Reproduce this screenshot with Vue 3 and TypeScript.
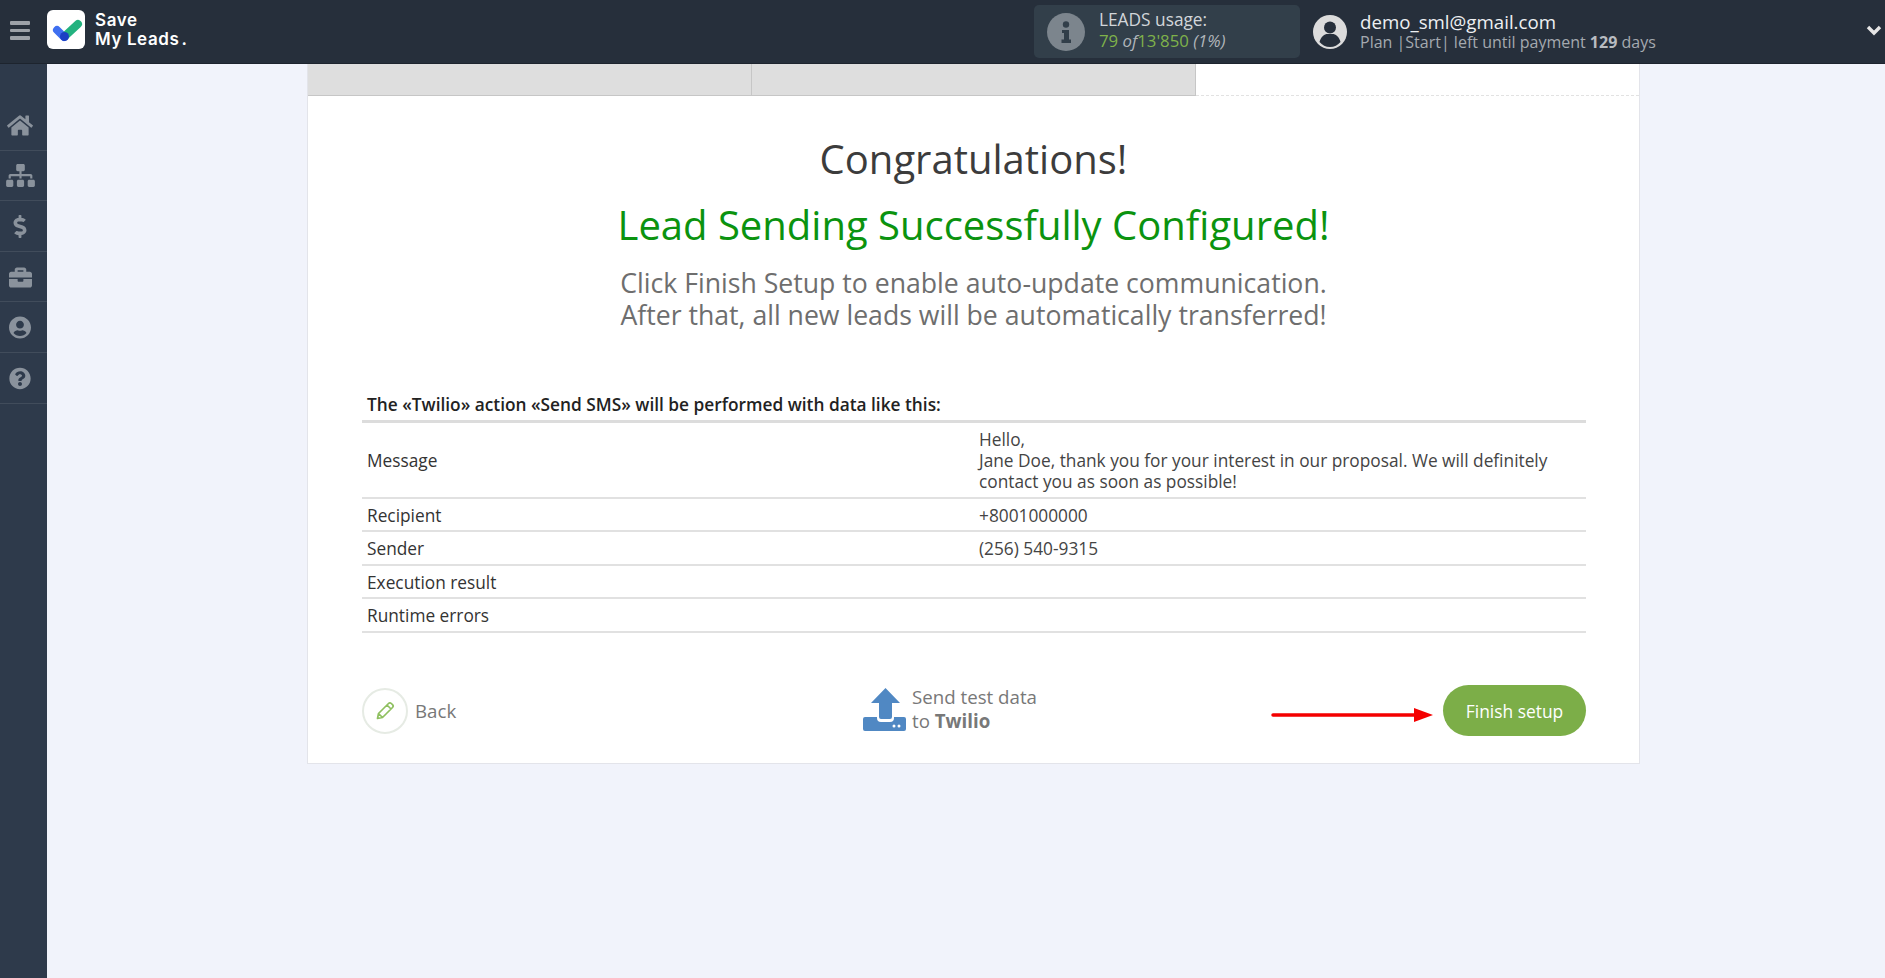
<script setup lang="ts">
interface Row { label: string; lines: string[] }
const rows: Row[] = [
  { label: 'Message', lines: ['Hello,', 'Jane Doe, thank you for your interest in our proposal. We will definitely contact you as soon as possible!'] },
  { label: 'Recipient', lines: ['+8001000000'] },
  { label: 'Sender', lines: ['(256) 540-9315'] },
  { label: 'Execution result', lines: [] },
  { label: 'Runtime errors', lines: [] },
]
const nav = [
  { vb: '0 0 576 512', w: 26, d: 'M280.37 148.26L96 300.11V464a16 16 0 0 0 16 16l112.06-.29a16 16 0 0 0 15.92-16V368a16 16 0 0 1 16-16h64a16 16 0 0 1 16 16v95.64a16 16 0 0 0 16 16.05L464 480a16 16 0 0 0 16-16V300L295.67 148.26a12.19 12.19 0 0 0-15.3 0zM571.6 251.47L488 182.56V44.05a12 12 0 0 0-12-12h-56a12 12 0 0 0-12 12v72.61L318.47 43a48 48 0 0 0-61 0L4.34 251.47a12 12 0 0 0-1.6 16.9l25.5 31A12 12 0 0 0 45.15 301l235.22-193.74a12.19 12.19 0 0 1 15.3 0L530.9 301a12 12 0 0 0 16.9-1.6l25.5-31a12 12 0 0 0-1.7-16.93z' },
  { vb: '0 0 640 512', w: 29, d: 'M128 352H32c-17.67 0-32 14.33-32 32v96c0 17.67 14.33 32 32 32h96c17.67 0 32-14.33 32-32v-96c0-17.67-14.33-32-32-32zm-24-80h192v48h48v-48h192v48h48v-57.59c0-21.17-17.23-38.41-38.41-38.41H344v-64h40c17.67 0 32-14.33 32-32V32c0-17.67-14.33-32-32-32H256c-17.67 0-32 14.33-32 32v96c0 17.67 14.33 32 32 32h40v64H94.41C73.23 224 56 241.23 56 262.41V320h48v-48zm264 80h-96c-17.67 0-32 14.33-32 32v96c0 17.67 14.33 32 32 32h96c17.67 0 32-14.33 32-32v-96c0-17.67-14.33-32-32-32zm240 0h-96c-17.67 0-32 14.33-32 32v96c0 17.67 14.33 32 32 32h96c17.67 0 32-14.33 32-32v-96c0-17.67-14.33-32-32-32z' },
  { vb: '0 0 288 512', w: 14, d: 'M209.2 233.4l-108-31.6C88.7 198.2 80 186.5 80 173.5c0-16.3 13.2-29.5 29.5-29.5h66.3c12.2 0 24.2 3.7 34.2 10.5 6.1 4.1 14.3 3.1 19.5-2l34.8-34c7.1-6.9 6.1-18.4-1.8-24.5C238 74.8 207.4 64.1 176 64V16c0-8.8-7.2-16-16-16h-32c-8.8 0-16 7.2-16 16v48h-2.5C45.8 64-5.4 118.7.5 183.6c4.2 46.1 39.4 83.6 83.8 96.6l102.5 30c12.5 3.7 21.2 15.3 21.2 28.3 0 16.3-13.2 29.5-29.5 29.5h-66.3C100 368 88 364.3 78 357.5c-6.1-4.1-14.3-3.1-19.5 2l-34.8 34c-7.1 6.9-6.1 18.4 1.8 24.5 24.5 19.2 55.1 29.9 86.5 30v48c0 8.8 7.2 16 16 16h32c8.8 0 16-7.2 16-16v-48.2c46.6-.9 90.3-28.6 105.7-72.7 21.5-61.6-14.6-124.8-72.5-141.7z' },
  { vb: '0 0 512 512', w: 23, d: 'M320 336c0 8.84-7.16 16-16 16h-96c-8.84 0-16-7.16-16-16v-48H0v144c0 25.6 22.4 48 48 48h416c25.6 0 48-22.4 48-48V288H320v48zm144-208h-80V80c0-25.6-22.4-48-48-48H176c-25.6 0-48 22.4-48 48v48H48c-25.6 0-48 22.4-48 48v80h512v-80c0-25.6-22.4-48-48-48zm-144 0H192V96h128v32z' },
  { vb: '0 0 496 512', w: 22, d: 'M248 8C111 8 0 119 0 256s111 248 248 248 248-111 248-248S385 8 248 8zm0 96c48.6 0 88 39.4 88 88s-39.4 88-88 88-88-39.4-88-88 39.4-88 88-88zm0 344c-58.7 0-111.3-26.6-146.5-68.2 18.8-35.4 55.6-59.8 98.5-59.8 2.4 0 4.8.4 7.1 1.1 13 4.2 26.6 6.9 40.9 6.9 14.3 0 28-2.7 40.9-6.9 2.3-.7 4.7-1.1 7.1-1.1 42.9 0 79.7 24.4 98.5 59.8C359.3 421.4 306.7 448 248 448z' },
  { vb: '0 0 512 512', w: 22, d: 'M504 256c0 136.997-111.043 248-248 248S8 392.997 8 256C8 119.083 119.043 8 256 8s248 111.083 248 248zM262.655 90c-54.497 0-89.255 22.957-116.549 63.758-3.536 5.286-2.353 12.415 2.715 16.258l34.699 26.31c5.205 3.947 12.621 3.008 16.665-2.122 17.864-22.658 30.113-35.797 57.303-35.797 20.429 0 45.698 13.148 45.698 32.958 0 14.976-12.363 22.667-32.534 33.976C247.128 238.528 216 254.941 216 296v4c0 6.627 5.373 12 12 12h56c6.627 0 12-5.373 12-12v-1.333c0-28.462 83.186-29.647 83.186-106.667 0-58.002-60.165-102-116.531-102zM256 338c-25.365 0-46 20.635-46 46 0 25.364 20.635 46 46 46s46-20.636 46-46c0-25.365-20.635-46-46-46z' },
]
</script>

<template>
  <div class="page">
    <header class="topbar">
      <div class="burger"><span></span><span></span><span></span></div>
      <div class="logo">
        <svg viewBox="0 0 38 39" width="38" height="39">
          <rect width="38" height="39" rx="6" fill="#fff" />
          <path d="M10 20l7 7" stroke="#3f6ff0" stroke-width="8" stroke-linecap="round" />
          <path d="M18 26L31 14" stroke="#23b27f" stroke-width="8" stroke-linecap="round" />
          <circle cx="17.5" cy="26.500" r="4.500" fill="#1c3fc4" />
        </svg>
        <div class="logo-text">Save<br />My Leads<span class="dot">.</span></div>
      </div>
      <div class="usage">
        <svg class="info" viewBox="0 0 38 38" width="38" height="38">
          <circle cx="19" cy="19" r="19" fill="#7c858d" />
          <circle cx="19" cy="11.500" r="3.200" fill="#323f4a" />
          <path d="M15 17h7v9.500h2V30H14.500v-3.500H17V20h-2z" fill="#323f4a" />
        </svg>
        <div class="usage-text">
          <div class="usage-title">LEADS usage:</div>
          <div class="usage-val"><span class="g">79</span> <i>of</i><span class="g">13'850</span> <i>(1%)</i></div>
        </div>
      </div>
      <div class="account">
        <svg viewBox="0 0 34 34" width="34" height="34">
          <circle cx="17" cy="17" r="17" fill="#dcdcdc" />
          <circle cx="17" cy="12.500" r="6" fill="#262f3b" />
          <path d="M6.500 27c1.500-5.500 5-8 8-8h5c3 0 6.500 2.500 8 8-2.500 3-6.300 5-10.500 5s-8-2-10.500-5z" fill="#262f3b" />
        </svg>
        <div class="account-text">
          <div class="email">demo_sml@gmail.com</div>
          <div class="plan">Plan |Start| left until payment <b>129</b> days</div>
        </div>
      </div>
      <svg class="chev" viewBox="0 0 16 12" width="16" height="12">
        <path d="M2 3l6 6 6-6" fill="none" stroke="#e6e6e6" stroke-width="3.400" />
      </svg>
    </header>

    <div class="body">
      <nav class="sidebar">
        <div v-for="(n, i) in nav" :key="i" class="nav-item">
          <svg :viewBox="n.vb" :width="n.w" height="23"><path :d="n.d" fill="#8a929c" /></svg>
        </div>
      </nav>

      <main class="main">
        <section class="card">
          <div class="tabs">
            <div class="tab"></div>
            <div class="tab"></div>
            <div class="tab-rest"></div>
          </div>

          <h1 class="congrats">Congratulations!</h1>
          <h2 class="success">Lead Sending Successfully Configured!</h2>
          <p class="sub">Click Finish Setup to enable auto-update communication.<br />After that, all new leads will be automatically transferred!</p>

          <div class="content">
            <div class="table-title">The «Twilio» action «Send SMS» will be performed with data like this:</div>
            <table class="data">
              <tbody>
                <tr v-for="r in rows" :key="r.label">
                  <td class="c1">{{ r.label }}</td>
                  <td class="c2"><div v-for="l in r.lines" :key="l">{{ l }}</div></td>
                </tr>
              </tbody>
            </table>

            <div class="actions">
              <div class="back">
                <span class="back-circle">
                  <svg viewBox="0 0 24 24" width="24" height="24">
                    <path d="M4.500 19.500l1-5L15.500 4.500c.8-.8 2-.8 2.800 0l1.200 1.200c.8.800.8 2 0 2.800L9.500 18.500zM14 6l4 4M5.500 14.500l4 4" fill="none" stroke="#8fc060" stroke-width="1.700" stroke-linejoin="round" />
                  </svg>
                </span>
                <span>Back</span>
              </div>
              <div class="send">
                <svg viewBox="0 0 43 43" width="43" height="43">
                  <path d="M22.500 0L37 15H29V29a2 2 0 0 1-2 2H18a2 2 0 0 1-2-2V15H8z" fill="#5088c3" />
                  <path d="M0 31a2 2 0 0 1 2-2H14V30a4 4 0 0 0 4 4H27a4 4 0 0 0 4-4V29H41a2 2 0 0 1 2 2V41a2 2 0 0 1-2 2H2a2 2 0 0 1-2-2z" fill="#5088c3" />
                  <circle cx="31" cy="38" r="1.500" fill="#fff" /><circle cx="36" cy="38" r="1.500" fill="#fff" />
                </svg>
                <div class="send-text">Send test data<br />to <b>Twilio</b></div>
              </div>
              <button class="finish" type="button">Finish setup</button>
              <svg class="arrow" viewBox="0 0 162 16" width="162" height="16">
                <path d="M2 8H146" stroke="#f40000" stroke-width="3.500" stroke-linecap="round" />
                <path d="M143 1L162 8L143 15z" fill="#f40000" />
              </svg>
            </div>
          </div>
        </section>
      </main>
    </div>
  </div>
</template>

<style>
html, body { margin: 0; background: #f1f3fb; }
</style>

<style scoped>
.page {
  width: 1885px;
  height: 978px;
  display: flex;
  flex-direction: column;
  overflow: hidden;
  font-family: "Open Sans", "Noto Sans", sans-serif;
  background: #f1f3fb;
}
.topbar {
  height: 64px;
  flex: none;
  background: #262f3b;
  display: flex;
  align-items: center;
  box-sizing: border-box;
  border-bottom: 1px solid #1d242e;
  position: relative;
}
.burger {
  width: 20px;
  margin-left: 10px;
  margin-bottom: 2px;
  display: flex;
  flex-direction: column;
  gap: 4px;
}
.burger span { display: block; height: 3.500px; border-radius: 1px; background: #9ca1a8; }
.logo { display: flex; align-items: center; margin-left: 17px; margin-bottom: 5px; width: 987px; gap: 10px; }
.logo-text {
  font-family: Inter, "Noto Sans", sans-serif;
  font-weight: 600;
  font-size: 17px;
  line-height: 19px;
  color: #fff;
  letter-spacing: 0.6px;
  padding-top: 1px;
}
.dot { letter-spacing: 0; margin-left: 2px; }
.usage {
  width: 266px;
  height: 53px;
  background: #323f4a;
  border-radius: 5px;
  display: flex;
  align-items: center;
  box-sizing: border-box;
  padding-left: 13px;
  gap: 14px;
}
.usage-text { line-height: 21px; color: #d2d6da; margin-bottom: 4px; }
.usage-title { font-size: 17.300px; }
.usage-val { font-size: 16.800px; color: #b0b5ba; }
.usage-val .g { color: #7fb24a; }
.account { display: flex; align-items: center; margin-left: 13px; gap: 13px; }
.account-text { color: #fff; margin-bottom: 2px; }
.email { font-size: 18.700px; line-height: 23px; color: #eef0f2; }
.plan { font-size: 16px; line-height: 19px; color: #a4a9af; }
.plan b { font-weight: 700; color: #b8bcc1; }
.chev { position: absolute; left: 1866px; top: 24px; }
.body { flex: 1; display: flex; min-height: 0; }
.sidebar { width: 47px; flex: none; background: #2e3a4b; padding-top: 36px; box-sizing: border-box; }
.nav-item {
  height: 50.600px;
  box-sizing: border-box;
  display: flex;
  align-items: center;
  justify-content: center;
  padding: 1px 7px 0 0;
  border-bottom: 1px solid #414c5b;
}
.main { flex: 1; padding-left: 260px; min-width: 0; }
.card {
  width: 1333px;
  height: 700px;
  box-sizing: border-box;
  background: #fff;
  border: 1px solid #e3e4ea;
  border-top: none;
}
.tabs { display: flex; height: 32px; }
.tab {
  width: 444px;
  background: #dedede;
  border-bottom: 1px solid #c6c6c6;
  border-right: 1px solid #c6c6c6;
  box-sizing: border-box;
}
.tab-rest { flex: 1; border-bottom: 1px dashed #e2e2e2; }
.congrats, .success, .sub { margin: 0; text-align: center; font-weight: 400; }
.congrats { font-size: 40px; line-height: 50px; color: #3c3c3c; margin-top: 38px; }
.success { font-size: 40px; line-height: 50px; color: #0b930f; margin-top: 16px; }
.sub { font-size: 26.650px; line-height: 32px; color: #6e6e6e; margin-top: 17px; }
.content { margin: 57px 53px 0 54px; position: relative; }
.table-title {
  font-size: 17.300px;
  font-weight: 600;
  line-height: 34px;
  height: 32px;
  color: #222;
  padding-left: 5px;
  border-bottom: 3px solid #dcdcdc;
}
.data { width: 100%; border-collapse: collapse; table-layout: fixed; font-size: 17.300px; line-height: 21px; color: #333; }
.data td { padding: 6px 5px 4.500px; border-bottom: 2px solid #e1e1e1; height: 21px; vertical-align: middle; box-sizing: content-box; }
.c1 { width: 602px; }
.c2 { color: #444; padding-right: 30px; }
.actions {
  margin-top: 53px;
  height: 50px;
  display: flex;
  align-items: center;
  justify-content: space-between;
  position: relative;
  font-size: 18.700px;
  color: #787878;
}
.back { display: flex; align-items: center; gap: 7px; width: 95px; }
.back-circle {
  width: 46px;
  height: 46px;
  box-sizing: border-box;
  border: 2px solid #e6ebe4;
  border-radius: 50%;
  display: flex;
  align-items: center;
  justify-content: center;
}
.send { display: flex; align-items: center; gap: 6px; width: 174px; margin-bottom: 3px; }
.send-text { line-height: 24px; white-space: nowrap; }
.send-text b { font-weight: 700; }
.finish {
  width: 143px;
  height: 51px;
  border: none;
  border-radius: 26px;
  background: #7cae48;
  color: #fff;
  font-family: inherit;
  font-size: 17.400px;
  padding: 0;
}
.arrow { position: absolute; left: 909px; top: 21px; }
</style>
